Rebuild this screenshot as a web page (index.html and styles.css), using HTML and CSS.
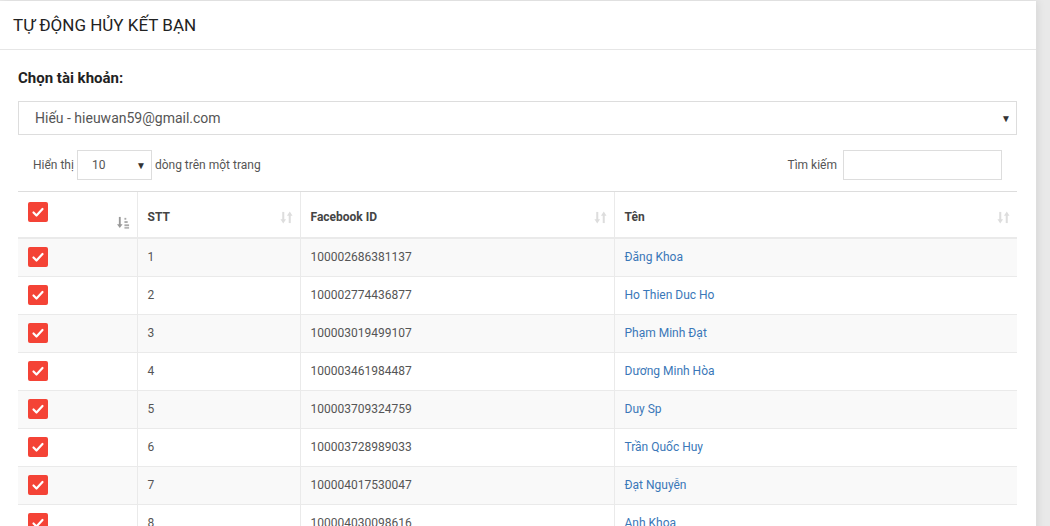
FILE: index.html
```html
<!DOCTYPE html>
<html lang="vi">
<head>
<meta charset="utf-8">
<title>Tự động hủy kết bạn</title>
<link rel="stylesheet" href="styles.css">
</head>
<body>
<div class="card">
  <div class="card-header">TỰ ĐỘNG HỦY KẾT BẠN</div>
  <div class="card-body">
    <div class="field-label">Chọn tài khoản:</div>
    <div class="select select-lg"><span>Hiếu - hieuwan59@gmail.com</span><span class="caret">▼</span></div>
    <div class="controls">
      <div class="length">Hiển thị <div class="select select-sm"><span>10</span><span class="caret">▼</span></div> dòng trên một trang</div>
      <div class="search">Tìm kiếm <div class="input"></div></div>
    </div>
    <table class="grid">
      <colgroup><col class="c1"><col class="c2"><col class="c3"><col class="c4"></colgroup>
      <thead>
        <tr>
          <th><div class="th-in th-first"><span class="cb"><svg viewBox="0 0 20 20"><path d="M5.5 10.5l3 3 6-6.5" fill="none" stroke="#fff" stroke-width="2.2" stroke-linecap="round" stroke-linejoin="round"/></svg></span>
            <svg class="sort sort-active" viewBox="0 0 14 14"><path d="M3 1v9" stroke="#999" stroke-width="2"/><path d="M0 9h6l-3 4z" fill="#999"/><rect x="8" y="2" width="2" height="2" fill="#aaa"/><rect x="8" y="5.5" width="3.5" height="2" fill="#aaa"/><rect x="8" y="9" width="5" height="2" fill="#aaa"/><rect x="8" y="12" width="5" height="1.6" fill="#aaa"/></svg></div></th>
          <th><div class="th-in">STT<svg class="sort" viewBox="0 0 14 14"><path d="M3.5 1v9" stroke="#ddd" stroke-width="2.2"/><path d="M0.5 9h6l-3 4.5z" fill="#ddd"/><path d="M10.5 4v9" stroke="#ddd" stroke-width="2.2"/><path d="M7.5 5h6l-3-4.5z" fill="#ddd"/></svg></div></th>
          <th><div class="th-in">Facebook ID<svg class="sort" viewBox="0 0 14 14"><path d="M3.5 1v9" stroke="#ddd" stroke-width="2.2"/><path d="M0.5 9h6l-3 4.5z" fill="#ddd"/><path d="M10.5 4v9" stroke="#ddd" stroke-width="2.2"/><path d="M7.5 5h6l-3-4.5z" fill="#ddd"/></svg></div></th>
          <th><div class="th-in">Tên<svg class="sort" viewBox="0 0 14 14"><path d="M3.5 1v9" stroke="#ddd" stroke-width="2.2"/><path d="M0.5 9h6l-3 4.5z" fill="#ddd"/><path d="M10.5 4v9" stroke="#ddd" stroke-width="2.2"/><path d="M7.5 5h6l-3-4.5z" fill="#ddd"/></svg></div></th>
        </tr>
      </thead>
      <tbody>
        <tr><td><span class="cb"><svg viewBox="0 0 20 20"><path d="M5.5 10.5l3 3 6-6.5" fill="none" stroke="#fff" stroke-width="2.2" stroke-linecap="round" stroke-linejoin="round"/></svg></span></td><td>1</td><td>100002686381137</td><td class="name">Đăng Khoa</td></tr>
        <tr><td><span class="cb"><svg viewBox="0 0 20 20"><path d="M5.5 10.5l3 3 6-6.5" fill="none" stroke="#fff" stroke-width="2.2" stroke-linecap="round" stroke-linejoin="round"/></svg></span></td><td>2</td><td>100002774436877</td><td class="name">Ho Thien Duc Ho</td></tr>
        <tr><td><span class="cb"><svg viewBox="0 0 20 20"><path d="M5.5 10.5l3 3 6-6.5" fill="none" stroke="#fff" stroke-width="2.2" stroke-linecap="round" stroke-linejoin="round"/></svg></span></td><td>3</td><td>100003019499107</td><td class="name">Phạm Minh Đạt</td></tr>
        <tr><td><span class="cb"><svg viewBox="0 0 20 20"><path d="M5.5 10.5l3 3 6-6.5" fill="none" stroke="#fff" stroke-width="2.2" stroke-linecap="round" stroke-linejoin="round"/></svg></span></td><td>4</td><td>100003461984487</td><td class="name">Dương Minh Hòa</td></tr>
        <tr><td><span class="cb"><svg viewBox="0 0 20 20"><path d="M5.5 10.5l3 3 6-6.5" fill="none" stroke="#fff" stroke-width="2.2" stroke-linecap="round" stroke-linejoin="round"/></svg></span></td><td>5</td><td>100003709324759</td><td class="name">Duy Sp</td></tr>
        <tr><td><span class="cb"><svg viewBox="0 0 20 20"><path d="M5.5 10.5l3 3 6-6.5" fill="none" stroke="#fff" stroke-width="2.2" stroke-linecap="round" stroke-linejoin="round"/></svg></span></td><td>6</td><td>100003728989033</td><td class="name">Trần Quốc Huy</td></tr>
        <tr><td><span class="cb"><svg viewBox="0 0 20 20"><path d="M5.5 10.5l3 3 6-6.5" fill="none" stroke="#fff" stroke-width="2.2" stroke-linecap="round" stroke-linejoin="round"/></svg></span></td><td>7</td><td>100004017530047</td><td class="name">Đạt Nguyễn</td></tr>
        <tr><td><span class="cb"><svg viewBox="0 0 20 20"><path d="M5.5 10.5l3 3 6-6.5" fill="none" stroke="#fff" stroke-width="2.2" stroke-linecap="round" stroke-linejoin="round"/></svg></span></td><td>8</td><td>100004030098616</td><td class="name">Anh Khoa</td></tr>
      </tbody>
    </table>
  </div>
</div>
</body>
</html>
```
FILE: styles.css
```css
html, body {
  margin: 0;
  padding: 0;
  overflow: hidden;
}
body {
  background: #e9e9e9;
  font-family: Roboto, "Liberation Sans", Arial, sans-serif;
  color: #555;
}
.card {
  width: 1036px;
  margin-top: 1px;
  background: #fff;
  box-shadow: 2px 0 8px rgba(0, 0, 0, 0.08);
  min-height: 600px;
}
.card-header {
  height: 49px;
  box-sizing: border-box;
  padding: 13px 13px 0;
  font-size: 17px;
  line-height: 22px;
  color: #222;
  border-bottom: 1px solid #e6e6e6;
}
.card-body {
  padding: 18px 19px 0 18px;
}
.field-label {
  font-size: 15px;
  font-weight: 700;
  color: #222;
  line-height: 20px;
  margin-bottom: 13px;
}
.select {
  display: flex;
  align-items: center;
  justify-content: space-between;
  box-sizing: border-box;
  border: 1px solid #ddd;
  background: #fff;
  color: #555;
}
.select-lg {
  height: 34px;
  padding: 0 5px 0 16px;
  font-size: 14px;
}
.caret {
  font-size: 10px;
  color: #333;
}
.controls {
  display: flex;
  justify-content: space-between;
  align-items: center;
  margin-top: 15px;
  padding: 0 15px;
  font-size: 12px;
  color: #555;
}
.length, .search {
  display: flex;
  align-items: center;
  gap: 3px;
}
.select-sm {
  width: 75px;
  height: 30px;
  padding: 0 5px 0 14px;
  font-size: 12px;
}
.search {
  gap: 6px;
}
.input {
  width: 159px;
  height: 30px;
  box-sizing: border-box;
  border: 1px solid #ddd;
}
.grid {
  width: 999px;
  margin-top: 11px;
  border-collapse: collapse;
  table-layout: fixed;
  font-size: 12px;
}
.c1 { width: 119px; }
.c2 { width: 163px; }
.c3 { width: 314px; }
.c4 { width: 403px; }
.grid th {
  border-top: 1px solid #ddd;
  border-bottom: 2px solid #eaeaea;
  border-left: 1px solid #eaeaea;
  padding: 10px 7px 10px 10px;
  text-align: left;
  font-weight: 700;
  color: #444;
  vertical-align: middle;
}
.grid th:first-child, .grid td:first-child {
  border-left: none;
}
.th-in {
  display: flex;
  justify-content: space-between;
  align-items: center;
  height: 25px;
  padding-top: 5px;
  box-sizing: border-box;
}
.th-first {
  align-items: flex-start;
  padding-top: 0;
}
.th-first .sort {
  align-self: flex-end;
  margin-bottom: -2px;
}
.sort {
  width: 13px;
  height: 13px;
  flex: none;
}
.grid td {
  height: 38px;
  box-sizing: border-box;
  padding: 0 10px;
  border-top: 1px solid #eaeaea;
  border-left: 1px solid #eaeaea;
  color: #555;
  vertical-align: middle;
}
.grid tbody tr:first-child td {
  border-top: none;
}
.grid tbody tr:nth-child(odd) td {
  background: #f9f9f9;
}
.grid td.name {
  color: #3a77b8;
}
.cb {
  display: inline-block;
  width: 20px;
  height: 20px;
  background: #f44336;
  border-radius: 2px;
  vertical-align: middle;
}
.cb svg {
  display: block;
  width: 20px;
  height: 20px;
}
```
